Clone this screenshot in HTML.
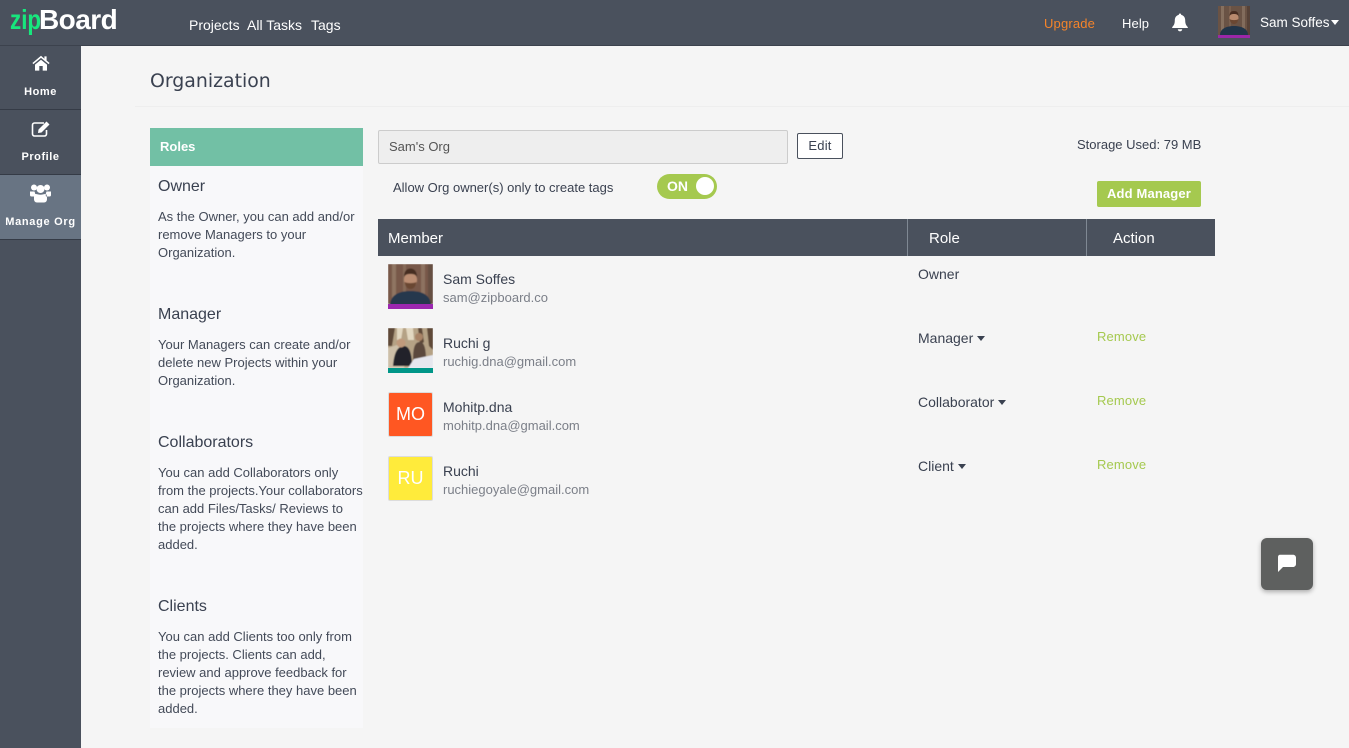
<!DOCTYPE html>
<html>
<head>
<meta charset="utf-8">
<style>
html,body{margin:0;padding:0}
body{width:1349px;height:748px;overflow:hidden;position:relative;background:#f5f5f5;font-family:"Liberation Sans",sans-serif;color:#3a4150}
.a{position:absolute;white-space:nowrap}
.p{position:absolute;left:158px;width:210px;font-size:13px;line-height:18px;color:#434a58;white-space:nowrap}
.h{position:absolute;left:158px;font-size:16px;line-height:20px;color:#3a4150}
.side{position:absolute;left:0;width:81px;height:64px;border-bottom:1px solid #353b46;color:#fff;text-align:center;box-sizing:content-box}
.side span{position:absolute;left:0;right:0;top:40px;font-size:11px;font-weight:bold;letter-spacing:.55px;line-height:14px}
.nm{position:absolute;left:443px;font-size:14px;line-height:16px;color:#3a4150}
.em{position:absolute;left:443px;font-size:13px;line-height:16px;color:#7b7f88}
.rl{position:absolute;left:918px;font-size:14px;line-height:16px;color:#3a4150}
.rl i{display:inline-block;width:0;height:0;border-left:4.5px solid transparent;border-right:4.5px solid transparent;border-top:5px solid #3a4150;margin-left:4px;vertical-align:2px}
.rm{position:absolute;left:1097px;font-size:13px;line-height:16px;color:#a5c94f;letter-spacing:.15px}
.init{position:absolute;left:388px;width:45px;height:45px;box-sizing:border-box;border:1px solid #dcdcdc;border-radius:2px;color:#fff;font-size:18px;line-height:43px;text-align:center}
</style>
</head>
<body>
<!-- top bar -->
<div class="a" style="left:0;top:0;width:1349px;height:46px;background:#4a515d;border-bottom:1px solid #3c424d;box-sizing:border-box"></div>
<div class="a" style="left:10px;top:2px;font-size:28px;line-height:36px;font-weight:bold;color:#17e77d;transform:scaleX(.8);transform-origin:left top">zip</div>
<div class="a" style="left:39px;top:2px;font-size:28px;line-height:36px;font-weight:bold;letter-spacing:-.55px;color:#fff">Board</div>
<div class="a" style="left:189px;top:17px;font-size:14px;line-height:17px;color:#fff">Projects</div>
<div class="a" style="left:247px;top:17px;font-size:14px;line-height:17px;color:#fff">All Tasks</div>
<div class="a" style="left:311px;top:17px;font-size:14px;line-height:17px;color:#fff">Tags</div>
<div class="a" style="left:1044px;top:16px;font-size:13px;line-height:16px;color:#f5842a;letter-spacing:.17px">Upgrade</div>
<div class="a" style="left:1122px;top:16px;font-size:13px;line-height:16px;color:#fff;letter-spacing:.1px">Help</div>
<svg class="a" style="left:1171px;top:13px" width="18" height="19" viewBox="0 0 18 19"><path d="M9 0.5c.8 0 1.300.6 1.200 1.400 2.600.6 4 2.700 4 5.300 0 3.500.9 5.200 2.600 6.800v1H1.200v-1C2.900 12.400 3.800 10.700 3.800 7.200c0-2.600 1.400-4.700 4-5.300C7.700 1.100 8.200.5 9 .5zM6.800 16.200h4.400c0 1.200-1 2.100-2.200 2.100s-2.200-.9-2.200-2.100z" fill="#fff"/></svg>
<svg class="a" style="left:1218px;top:6px" width="32" height="32" viewBox="0 0 32 32">
<defs><filter id="b1" x="0" y="0" width="100%" height="100%"><feGaussianBlur stdDeviation=".35"/></filter></defs>
<g filter="url(#b1)">
<rect width="32" height="29" fill="#6b5244"/>
<rect x="3" width="3" height="29" fill="#86705f"/><rect x="11" width="2" height="29" fill="#7a6050"/><rect x="24" width="3" height="29" fill="#826c5b"/><rect x="29" width="3" height="29" fill="#574337"/>
<path d="M2 29c0-6 6-9 14-9s14 3 14 9z" fill="#22364a"/>
<ellipse cx="16" cy="12" rx="4.500" ry="5.500" fill="#b98a6e"/>
<path d="M11.500 10c0-3.500 1.500-5 4.500-5s4.500 1.500 4.500 5c-1-1.500-2-2-4.500-2s-3.500.5-4.500 2z" fill="#4a2f22"/>
<path d="M11.500 13c1 4 2.500 5 4.500 5s3.500-1 4.500-5c-2 1.500-7 1.500-9 0z" fill="#6a4632"/>
</g>
<rect y="29" width="32" height="3" fill="#9c27a8"/></svg>
<div class="a" style="left:1260px;top:14px;font-size:13.500px;line-height:17px;color:#fff">Sam Soffes</div>
<div class="a" style="left:1331px;top:20px;width:0;height:0;border-left:4.500px solid transparent;border-right:4.500px solid transparent;border-top:5px solid #fff"></div>

<!-- sidebar -->
<div class="a" style="left:0;top:46px;width:81px;height:702px;background:#4a515d"></div>
<div class="side" style="top:45px"><span>Home</span></div>
<div class="side" style="top:110px"><span>Profile</span></div>
<div class="side" style="top:175px;background:#687483"><span style="letter-spacing:.7px">Manage Org</span></div>
<svg class="a" style="left:32px;top:55px" width="18" height="16" viewBox="0 0 18 16"><path d="M9 .8 .4 8l1 1.100L9 2.900l7.600 6.200 1-1.100-3-2.500V1.400h-2.200v2.300zM3 9.600V15.600H7.300V11h3.400v4.600H15V9.600L9 4.700z" fill="#fff"/></svg>
<svg class="a" style="left:31px;top:120px" width="20" height="17" viewBox="0 0 20 17"><path d="M13 3H3.500C2.400 3 1.500 3.900 1.500 5v9c0 1.100.9 2 2 2h10c1.100 0 2-.9 2-2v-4" fill="none" stroke="#fff" stroke-width="1.600"/><path d="M7.500 9.500 15.500 1.500 18.500 4.500 10.500 12.500 7 13z" fill="#fff"/></svg>
<svg class="a" style="left:30px;top:183px" width="21" height="21" viewBox="0 0 21 21" fill="#fff"><circle cx="4" cy="4.500" r="3"/><circle cx="17" cy="4.500" r="3"/><circle cx="10.500" cy="6" r="4"/><path d="M0 8.500h4.500c.8 2 1 3 .5 5H1.500C.5 13.500 0 13 0 12zM21 8.500h-4.500c-.8 2-1 3-.5 5h3.500c1 0 1.500-.5 1.500-1.500zM5.500 11c1.500 0 3 .8 5 .8s3.500-.8 5-.8 1.500 2.500 1.500 5c0 2-1 3.500-3 3.500H7c-2 0-3-1.500-3-3.500 0-2.500 0-5 1.500-5z"/></svg>

<!-- heading -->
<div class="a" style="left:150px;top:69px;font-family:'DejaVu Sans',sans-serif;font-size:18.900px;line-height:24px;color:#3a4150">Organization</div>
<div class="a" style="left:135px;top:106px;width:1214px;height:1px;background:#eeeeee"></div>

<!-- roles panel -->
<div class="a" style="left:150px;top:128px;width:213px;height:600px;background:#f8f8fa"></div>
<div class="a" style="left:150px;top:128px;width:213px;height:38px;background:#72c0a5"></div>
<div class="a" style="left:160px;top:139px;font-size:13px;line-height:16px;font-weight:bold;color:#fff">Roles</div>

<div class="h" style="top:177px">Owner</div>
<div class="p" style="top:208px">As the Owner, you can add and/or<br>remove Managers to your<br>Organization.</div>
<div class="h" style="top:305px">Manager</div>
<div class="p" style="top:336px">Your Managers can create and/or<br>delete new Projects within your<br>Organization.</div>
<div class="h" style="top:433px">Collaborators</div>
<div class="p" style="top:464px">You can add Collaborators only<br>from the projects.Your collaborators<br>can add Files/Tasks/ Reviews to<br>the projects where they have been<br>added.</div>
<div class="h" style="top:597px">Clients</div>
<div class="p" style="top:628px">You can add Clients too only from<br>the projects. Clients can add,<br>review and approve feedback for<br>the projects where they have been<br>added.</div>

<!-- org name -->
<div class="a" style="left:378px;top:130px;width:410px;height:34px;box-sizing:border-box;background:#eeeeee;border:1px solid #cccccc;border-radius:2px;font-size:13px;line-height:32px;padding-left:10px;color:#555">Sam's Org</div>
<div class="a" style="left:797px;top:133px;width:46px;height:26px;box-sizing:border-box;background:#fff;border:1px solid #4a515d;border-radius:2px;font-size:13px;line-height:23px;text-align:center;color:#3a4150;letter-spacing:.2px">Edit</div>
<div class="a" style="left:1077px;top:137px;font-size:13px;line-height:16px;color:#3a4150">Storage Used: 79 MB</div>
<div class="a" style="left:393px;top:180px;font-size:13px;line-height:16px;color:#3a4150">Allow Org owner(s) only to create tags</div>
<div class="a" style="left:657px;top:174px;width:60px;height:25px;border-radius:13px;background:#a5c94f"></div>
<div class="a" style="left:667px;top:178px;font-size:14px;line-height:16px;font-weight:bold;color:#fff">ON</div>
<div class="a" style="left:696px;top:177px;width:18px;height:18px;border-radius:50%;background:#fff"></div>
<div class="a" style="left:1097px;top:181px;width:104px;height:26px;border-radius:2px;background:#a5c94f;color:#fff;font-size:13px;font-weight:bold;line-height:25px;text-align:center;letter-spacing:.15px">Add Manager</div>

<!-- table header -->
<div class="a" style="left:378px;top:219px;width:837px;height:37px;background:#4a515d"></div>
<div class="a" style="left:907px;top:219px;width:1px;height:37px;background:#7f8893"></div>
<div class="a" style="left:1086px;top:219px;width:1px;height:37px;background:#7f8893"></div>
<div class="a" style="left:388px;top:230px;font-size:15px;line-height:17px;color:#fff">Member</div>
<div class="a" style="left:929px;top:230px;font-size:15px;line-height:17px;color:#fff">Role</div>
<div class="a" style="left:1113px;top:230px;font-size:15px;line-height:17px;color:#fff">Action</div>

<!-- rows -->
<svg class="a" style="left:388px;top:264px" width="45" height="45" viewBox="0 0 45 45">
<defs><filter id="b2" x="0" y="0" width="100%" height="100%"><feGaussianBlur stdDeviation=".4"/></filter></defs>
<g filter="url(#b2)">
<rect width="45" height="40" fill="#78594a"/>
<rect x="4" width="4" height="40" fill="#8f7462"/><rect x="15" width="3" height="40" fill="#866a58"/><rect x="33" width="4" height="40" fill="#8d7260"/><rect x="40" width="5" height="40" fill="#665043"/>
<path d="M2 42c0-11 9-15 20.500-15S43 31 43 42z" fill="#25394e"/>
<ellipse cx="22.500" cy="16" rx="6.500" ry="8" fill="#bb8d72"/>
<path d="M16 13c0-6 3-8.500 6.500-8.500S29 7 29 13c-1.500-2.500-3-3-6.500-3s-5 .5-6.500 3z" fill="#472e22"/>
<path d="M16.500 18c1 5 3 7 6 7s5-2 6-7c-3 1.500-9 1.500-12 0z" fill="#6b4733"/>
</g>
<rect y="40" width="45" height="5" fill="#9c27b0"/></svg>
<div class="nm" style="top:271px">Sam Soffes</div>
<div class="em" style="top:290px">sam@zipboard.co</div>
<div class="rl" style="top:266px">Owner</div>

<svg class="a" style="left:388px;top:328px" width="45" height="45" viewBox="0 0 45 45">
<defs><filter id="b3" x="0" y="0" width="100%" height="100%"><feGaussianBlur stdDeviation=".5"/></filter></defs>
<g filter="url(#b3)">
<rect width="45" height="40" fill="#b5a285"/>
<path d="M0 0h7l-3 18H0zM30 0h4l2 14-4 3zM39 0h6v22l-4-4z" fill="#5f4a37"/>
<path d="M9 0h6l-2 12H9zM18 0h7l1 12h-6z" fill="#e3d8c1"/>
<path d="M0 20l12-4 8 10-4 14H0z" fill="#cdbfa8"/>
<path d="M5 38c1-14 5-20 11-20 5 0 8 7 8 20z" fill="#22222a"/>
<circle cx="13" cy="15" r="4.500" fill="#c09a7c"/>
<path d="M25 32c0-13 2-18 7-18 4 0 6 6 6 18z" fill="#5c4a3e"/>
<circle cx="31" cy="9" r="4" fill="#a88366"/>
<path d="M20 40l6-9 19-4v13z" fill="#e6e7ee"/>
</g>
<rect y="40" width="45" height="5" fill="#009688"/></svg>
<div class="nm" style="top:335px">Ruchi g</div>
<div class="em" style="top:354px">ruchig.dna@gmail.com</div>
<div class="rl" style="top:330px">Manager<i></i></div>
<div class="rm" style="top:329px">Remove</div>

<div class="init" style="top:392px;background:#ff5722">MO</div>
<div class="nm" style="top:399px">Mohitp.dna</div>
<div class="em" style="top:418px">mohitp.dna@gmail.com</div>
<div class="rl" style="top:394px">Collaborator<i></i></div>
<div class="rm" style="top:393px">Remove</div>

<div class="init" style="top:456px;background:#ffeb3b">RU</div>
<div class="nm" style="top:463px">Ruchi</div>
<div class="em" style="top:482px">ruchiegoyale@gmail.com</div>
<div class="rl" style="top:458px">Client<i></i></div>
<div class="rm" style="top:457px">Remove</div>

<!-- chat -->
<div class="a" style="left:1261px;top:538px;width:52px;height:52px;border-radius:6px;background:#5e605f;box-shadow:0 2px 5px rgba(0,0,0,.3)"></div>
<svg class="a" style="left:1277px;top:554px" width="20" height="20" viewBox="0 0 20 20"><path d="M3 .7h13c1.700 0 3 1.300 3 3V10c0 1.700-1.300 3-3 3H6l-5 5V3c0-1.300.8-2.300 2-2.300z" fill="#fff"/></svg>
</body>
</html>
